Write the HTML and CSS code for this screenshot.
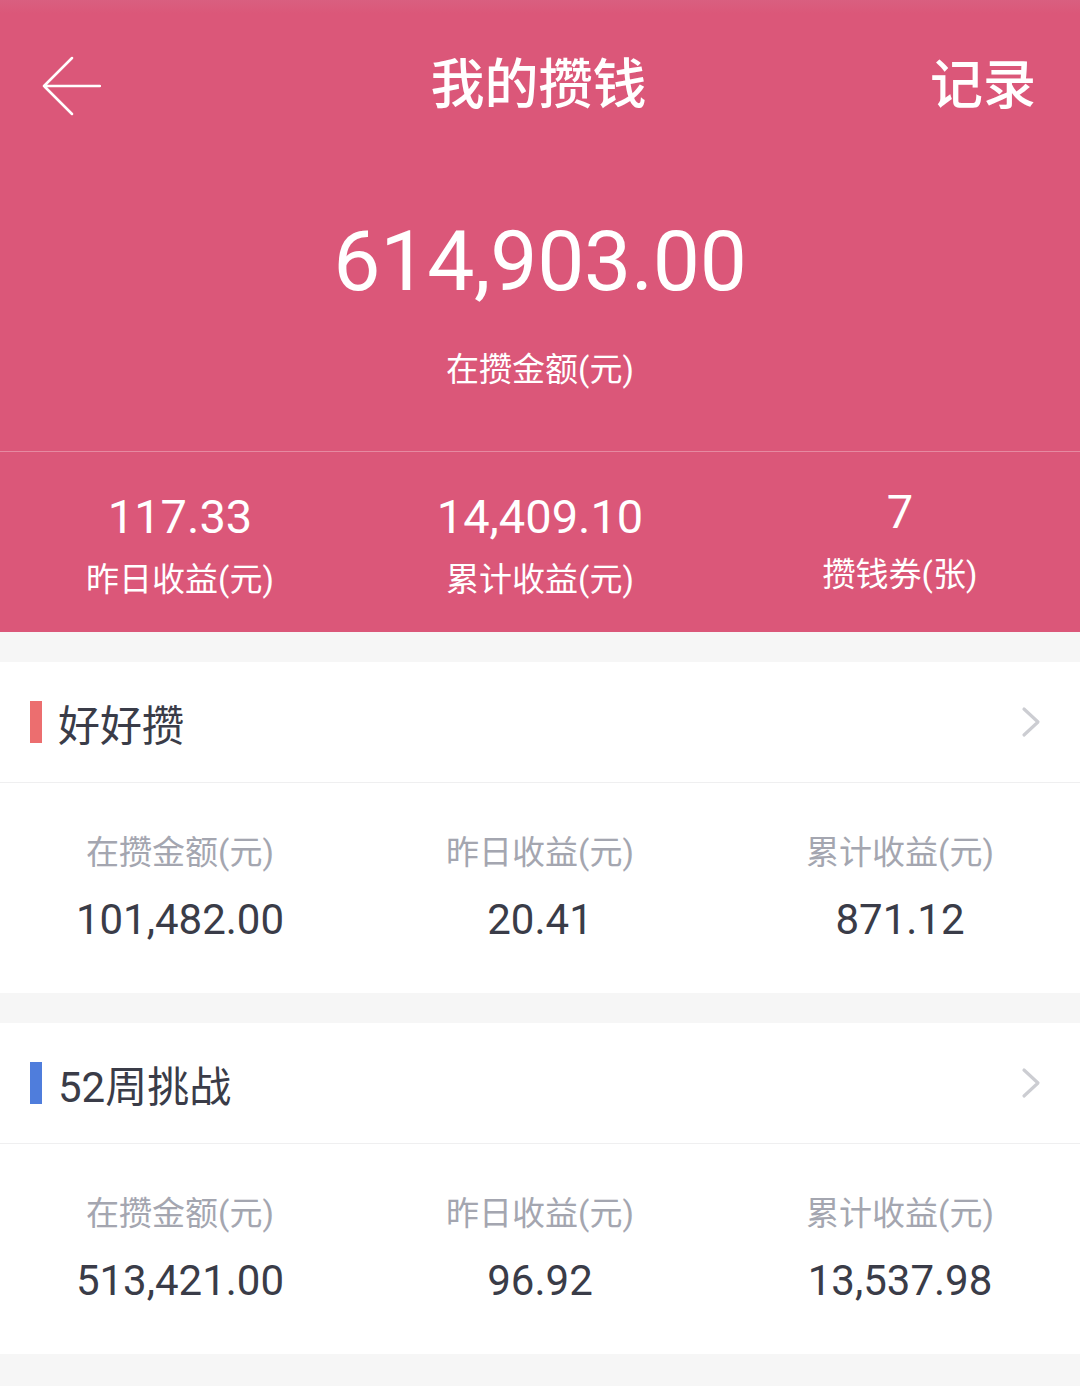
FILE: index.html
```html
<!DOCTYPE html>
<html lang="zh-CN">
<head>
    <meta charset="UTF-8">
    <meta name="viewport" content="width=device-width, initial-scale=1.0">
    <title>我的攒钱</title>
    <link rel="stylesheet" href="styles.css">
</head>
<body>
    <div class="summary">
        <div class="topbar">
            <a class="back" href="#">
                <svg width="60" height="60" viewBox="0 0 60 60">
                    <path d="M59 30 H3 M31 2 L3 30 L31 58" fill="none" stroke="#fff" stroke-width="2.5" stroke-linecap="round" stroke-linejoin="round"/>
                </svg>
            </a>
            <h1>我的攒钱</h1>
            <a class="record" href="#">记录</a>
        </div>
        <div class="total">
            <div class="total-num">614,903.00</div>
            <div class="total-label">在攒金额(元)</div>
        </div>
        <div class="stats">
            <div class="stat">
                <div class="stat-num">117.33</div>
                <div class="stat-label">昨日收益(元)</div>
            </div>
            <div class="stat">
                <div class="stat-num">14,409.10</div>
                <div class="stat-label">累计收益(元)</div>
            </div>
            <div class="stat stat-tickets">
                <div class="stat-num">7</div>
                <div class="stat-label">攒钱券(张)</div>
            </div>
        </div>
    </div>

    <div class="list">
        <div class="card">
            <div class="card-head">
                <span class="bar bar-red"></span>
                <span class="card-title">好好攒</span>
                <svg class="chevron" width="20" height="32" viewBox="0 0 20 32">
                    <path d="M3 3 L17 16 L3 29" fill="none" stroke="#cccdd2" stroke-width="3.2" stroke-linecap="round" stroke-linejoin="round"/>
                </svg>
            </div>
            <div class="card-body">
                <div class="cell">
                    <div class="cell-label">在攒金额(元)</div>
                    <div class="cell-num">101,482.00</div>
                </div>
                <div class="cell">
                    <div class="cell-label">昨日收益(元)</div>
                    <div class="cell-num">20.41</div>
                </div>
                <div class="cell">
                    <div class="cell-label">累计收益(元)</div>
                    <div class="cell-num">871.12</div>
                </div>
            </div>
        </div>

        <div class="card">
            <div class="card-head">
                <span class="bar bar-blue"></span>
                <span class="card-title">52周挑战</span>
                <svg class="chevron" width="20" height="32" viewBox="0 0 20 32">
                    <path d="M3 3 L17 16 L3 29" fill="none" stroke="#cccdd2" stroke-width="3.2" stroke-linecap="round" stroke-linejoin="round"/>
                </svg>
            </div>
            <div class="card-body">
                <div class="cell">
                    <div class="cell-label">在攒金额(元)</div>
                    <div class="cell-num">513,421.00</div>
                </div>
                <div class="cell">
                    <div class="cell-label">昨日收益(元)</div>
                    <div class="cell-num">96.92</div>
                </div>
                <div class="cell">
                    <div class="cell-label">累计收益(元)</div>
                    <div class="cell-num">13,537.98</div>
                </div>
            </div>
        </div>
    </div>
</body>
</html>
```

FILE: styles.css
```css
/* 我的攒钱 */
body, html {
    margin: 0;
    padding: 0;
    font-family: Roboto, "Noto Sans CJK SC", sans-serif;
    background: #f6f6f6;
}
a {
    color: inherit;
    text-decoration: none;
}
.summary {
    background: linear-gradient(180deg, #d95f80 0, #db5779 14px);
    color: #fff;
}
.topbar {
    height: 172px;
    padding: 0 44px 0 41px;
    display: grid;
    grid-template-columns: 1fr auto 1fr;
    align-items: center;
}
.back {
    display: flex;
    align-items: center;
}
.topbar h1 {
    margin: 0;
    font-size: 54px;
    font-weight: 500;
    line-height: 60px;
}
.record {
    justify-self: end;
    font-size: 53px;
    font-weight: 500;
    line-height: 60px;
}
.total {
    padding: 40px 0 59px;
    text-align: center;
    border-bottom: 1px solid rgba(255, 255, 255, 0.3);
}
.total-num {
    font-size: 84px;
    letter-spacing: -0.3px;
    line-height: 100px;
}
.total-label {
    margin-top: 36px;
    font-size: 33px;
    line-height: 44px;
}
.stats {
    display: flex;
    padding: 37px 0 30px;
}
.stat {
    flex: 1;
    text-align: center;
}
.stat-num {
    font-size: 47px;
    line-height: 56px;
}
.stat-label {
    margin-top: 13px;
    font-size: 33px;
    line-height: 44px;
}
.stat-tickets {
    margin-top: -5px;
}
.list {
    padding: 30px 0;
    display: flex;
    flex-direction: column;
    gap: 30px;
}
.card {
    background: #fff;
}
.card-head {
    height: 120px;
    padding: 0 39px 0 30px;
    display: flex;
    align-items: center;
    border-bottom: 1px solid #efeff0;
}
.bar {
    width: 12px;
    height: 42px;
    margin-right: 16px;
}
.bar-red {
    background: #ec6e6f;
}
.bar-blue {
    background: #4f7ddc;
}
.card-title {
    flex: 1;
    font-size: 42px;
    color: #3a3c48;
}
.card-body {
    display: flex;
    padding: 48px 0 47px;
}
.cell {
    flex: 1;
    text-align: center;
}
.cell-label {
    font-size: 33px;
    line-height: 44px;
    color: #a4a6b0;
}
.cell-num {
    margin-top: 19px;
    font-size: 42px;
    line-height: 52px;
    color: #3a3c48;
}
```
